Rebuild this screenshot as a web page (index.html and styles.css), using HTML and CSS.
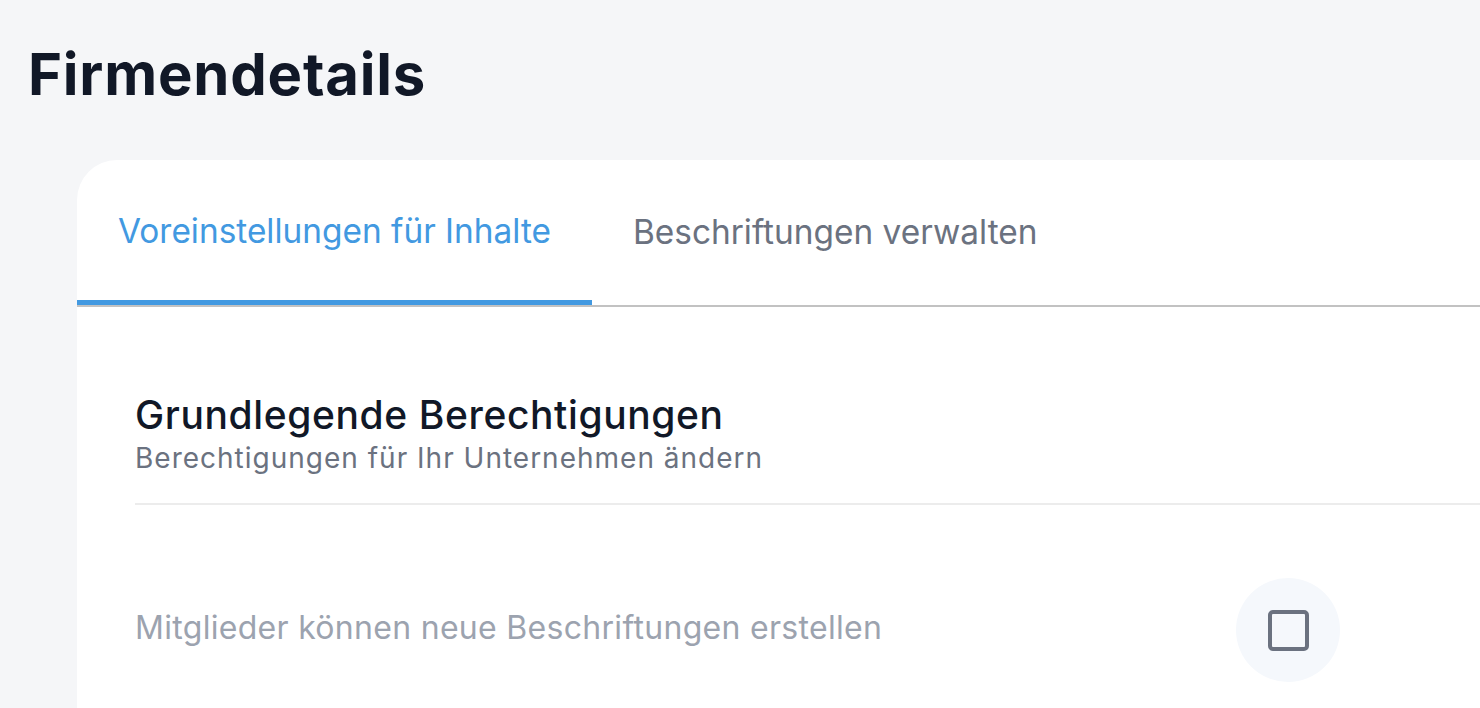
FILE: index.html
```html
<!DOCTYPE html>
<html lang="de">
<head>
<meta charset="utf-8">
<title>Firmendetails</title>
<link rel="stylesheet" href="styles.css">
</head>
<body>
<main class="page">
  <h1 class="page-title">Firmendetails</h1>
  <section class="card">
    <nav class="tabs">
      <a class="tab tab-active">Voreinstellungen für Inhalte</a>
      <a class="tab">Beschriftungen verwalten</a>
    </nav>
    <div class="card-body">
      <header class="section-head">
        <h2 class="section-title">Grundlegende Berechtigungen</h2>
        <p class="section-sub">Berechtigungen für Ihr Unternehmen ändern</p>
      </header>
      <div class="setting-row">
        <span class="setting-label">Mitglieder können neue Beschriftungen erstellen</span>
        <span class="check-wrap"><span class="check-box"></span></span>
      </div>
    </div>
  </section>
</main>
</body>
</html>
```

FILE: styles.css
```css
* { box-sizing: border-box; }
html, body { margin: 0; padding: 0; }
body {
  background: #f5f6f8;
  font-family: "Inter", "Noto Sans", sans-serif;
  overflow: hidden;
}
.page {
  padding: 34px 0 0 0;
}
.page-title {
  margin: 0 0 0 28px;
  font-size: 58px;
  line-height: 80px;
  font-weight: 700;
  color: #111827;
  letter-spacing: 0.8px;
}
.card {
  margin: 46px 0 0 77px;
  background: #ffffff;
  border-radius: 40px 0 0 0;
  min-height: 600px;
}
.tabs {
  display: flex;
  border-bottom: 2px solid #c2c2c2;
}
.tab {
  display: block;
  padding: 0 41px;
  height: 144px;
  line-height: 144px;
  font-size: 33.4px;
  color: #6b7280;
  font-weight: 400;
  white-space: nowrap;
}
.tab-active {
  color: #4299e1;
  border-bottom: 5px solid #4299e1;
  height: 145px;
  line-height: 142px;
}
.card-body {
  padding: 85px 0 0 58px;
}
.section-head {
  border-bottom: 2px solid #ececec;
  padding-bottom: 25px;
}
.section-title {
  margin: 0;
  font-size: 39px;
  line-height: 46px;
  font-weight: 500;
  color: #111827;
  letter-spacing: 0.6px;
}
.section-sub {
  margin: 0;
  font-size: 28px;
  line-height: 40px;
  color: #6b7280;
  letter-spacing: 1px;
}
.setting-row {
  display: flex;
  align-items: center;
  padding-top: 73px;
}
.setting-label {
  font-size: 32px;
  color: #9ca3af;
  width: 1101px;
  letter-spacing: 0.3px;
  padding-bottom: 5px;
}
.check-wrap {
  width: 104px;
  height: 104px;
  border-radius: 50%;
  background: #f5f8fc;
  display: flex;
  align-items: center;
  justify-content: center;
}
.check-box {
  width: 41px;
  height: 41px;
  border: 4px solid #6b7280;
  border-radius: 5px;
}
```
